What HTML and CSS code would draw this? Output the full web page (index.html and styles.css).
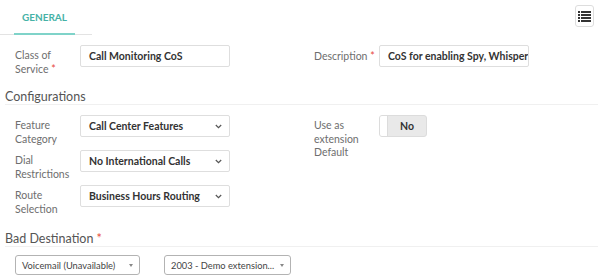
FILE: index.html
```html
<!DOCTYPE html>
<html>
<head>
<meta charset="utf-8">
<link rel="stylesheet" href="styles.css">
</head>
<body>
<div class="top">
  <div class="tabs"><div class="tab active">GENERAL</div></div>
  <button class="menu-btn" aria-label="menu">
    <svg width="13" height="11" viewBox="0 0 13 11">
      <rect x="0" y="0" width="2" height="2" fill="#333"/><rect x="3" y="0" width="10" height="2" fill="#333"/>
      <rect x="0" y="3" width="2" height="2" fill="#333"/><rect x="3" y="3" width="10" height="2" fill="#333"/>
      <rect x="0" y="6" width="2" height="2" fill="#333"/><rect x="3" y="6" width="10" height="2" fill="#333"/>
      <rect x="0" y="9" width="2" height="2" fill="#333"/><rect x="3" y="9" width="10" height="2" fill="#333"/>
    </svg>
  </button>
</div>

<div class="grid row1">
  <div class="label">Class of Service <span class="req">*</span></div>
  <div class="input">Call Monitoring CoS</div>
  <div></div>
  <div class="label single">Description <span class="req">*</span></div>
  <div class="input clip">CoS for enabling Spy, Whisper</div>
</div>

<div class="section">Configurations</div>

<div class="config">
  <div class="grid crow">
    <div class="label">Feature Category</div>
    <div class="input select">Call Center Features<svg class="chev" width="7" height="5" viewBox="0 0 7 5"><path d="M0.8 1 L3.5 3.7 L6.2 1" fill="none" stroke="#555" stroke-width="1.2"/></svg></div>
    <div></div>
    <div class="label">Use as extension Default</div>
    <div class="toggle"><span class="knob"></span><span class="tval">No</span></div>
  </div>
  <div class="grid crow">
    <div class="label">Dial Restrictions</div>
    <div class="input select">No International Calls<svg class="chev" width="7" height="5" viewBox="0 0 7 5"><path d="M0.8 1 L3.5 3.7 L6.2 1" fill="none" stroke="#555" stroke-width="1.2"/></svg></div>
  </div>
  <div class="grid crow">
    <div class="label">Route Selection</div>
    <div class="input select">Business Hours Routing<svg class="chev" width="7" height="5" viewBox="0 0 7 5"><path d="M0.8 1 L3.5 3.7 L6.2 1" fill="none" stroke="#555" stroke-width="1.2"/></svg></div>
  </div>
</div>

<div class="section bad">Bad Destination <span class="req">*</span></div>

<div class="dest">
  <div class="small-select s1"><span class="stext">Voicemail (Unavailable)</span><span class="tri"></span></div>
  <div class="small-select s2"><span class="stext">2003 - Demo extension...</span><span class="tri"></span></div>
</div>
</body>
</html>
```

FILE: styles.css
```css
* { box-sizing: border-box; }
body {
  margin: 0;
  width: 598px;
  height: 276px;
  overflow: hidden;
  background: #fff;
  font-family: "Lato", "Noto Sans", sans-serif;
  color: #333;
}
.top {
  display: flex;
  justify-content: space-between;
  align-items: flex-start;
  height: 45px;
}
.tabs {
  width: 92px;
  height: 35px;
  border-bottom: 1px solid #e3e3e3;
  padding-left: 14px;
  display: flex;
}
.tab {
  width: 61px;
  height: 35px;
  font-size: 10px;
  font-weight: 700;
  color: #46b2a6;
  text-align: center;
  padding-top: 11px;
}
.tab.active { border-bottom: 2px solid #7fd3c9; }
.menu-btn {
  margin: 5px 4px 0 0;
  width: 19px;
  height: 22px;
  border: 1px solid #ddd;
  border-radius: 3px;
  background: #fff;
  padding: 0;
  display: flex;
  align-items: center;
  justify-content: center;
}
.grid {
  display: grid;
  grid-template-columns: 65px 150px 84px 65px 150px;
  padding-left: 15px;
  align-items: start;
}
.label {
  font-size: 10.5px;
  line-height: 13.5px;
  color: #6e6e6e;
  padding-top: 4px;
  padding-right: 12px;
}
.label.single { padding-top: 5px; padding-right: 0; white-space: nowrap; }
.req { color: #e74c3c; }
.input {
  height: 22px;
  border: 1px solid #dedede;
  border-radius: 2px;
  font-size: 10.5px;
  font-weight: 700;
  color: #333;
  padding: 0 8px;
  line-height: 20px;
  white-space: nowrap;
  overflow: hidden;
  display: flex;
  align-items: center;
}
.input.clip { padding-right: 0; }
.select { justify-content: space-between; padding-right: 7px; }
.chev { flex: none; }
.row1 { height: 40px; }
.section {
  margin: 0 0 0 5px;
  font-size: 12.5px;
  line-height: 16px;
  color: #555;
  padding-top: 4px;
  border-bottom: 1px solid #f0f0f0;
  height: 20px;
}
.config { padding-top: 10px; }
.crow { height: 35px; }
.toggle {
  width: 48px;
  height: 22px;
  border: 1px solid #dcdcdc;
  border-radius: 3px;
  display: flex;
  overflow: hidden;
  background: #e9e9e9;
}
.knob {
  width: 8px;
  background: #fff;
  border-right: 1px solid #dcdcdc;
}
.tval {
  flex: 1;
  text-align: center;
  font-size: 10.5px;
  font-weight: 700;
  line-height: 20px;
}
.bad { margin-top: 7px; }
.dest {
  display: flex;
  gap: 24px;
  padding: 8px 0 0 15px;
}
.small-select {
  height: 20px;
  border: 1px solid #b3b3b3;
  border-radius: 3px;
  font-size: 9.3px;
  color: #444;
  padding: 0 6px;
  display: flex;
  align-items: center;
  justify-content: space-between;
  white-space: nowrap;
}
.s1 { width: 125px; }
.s2 { width: 127px; }
.tri {
  flex: none;
  margin-left: 4px;
  width: 0; height: 0;
  border-left: 2.5px solid transparent;
  border-right: 2.5px solid transparent;
  border-top: 3px solid #888;
}
```
